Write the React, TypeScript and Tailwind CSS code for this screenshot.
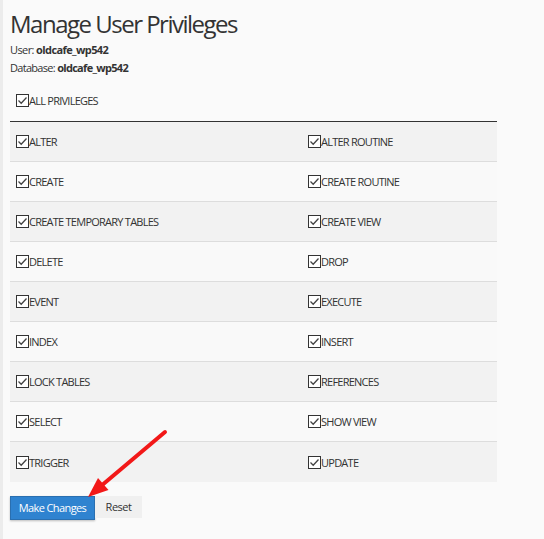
import React from 'react'

const rows: [string, string][] = [
    ['ALTER', 'ALTER ROUTINE'],
    ['CREATE', 'CREATE ROUTINE'],
    ['CREATE TEMPORARY TABLES', 'CREATE VIEW'],
    ['DELETE', 'DROP'],
    ['EVENT', 'EXECUTE'],
    ['INDEX', 'INSERT'],
    ['LOCK TABLES', 'REFERENCES'],
    ['SELECT', 'SHOW VIEW'],
    ['TRIGGER', 'UPDATE'],
]

function Check({ label }: { label: string }) {
    return (
        <label className="flex items-start">
            <span className="mt-[-1px] flex h-[13px] w-[13px] shrink-0 items-center justify-center border border-[#333] bg-white">
                <svg width="11" height="11" viewBox="0 0 11 11" fill="none">
                    <path d="M1.5 5.5 L4.2 8.2 L9.5 2.5" stroke="#444" strokeWidth="1.3" />
                </svg>
            </span>
            <span className="text-[11px] leading-[12px] tracking-[-0.75px] text-[#333]">{label}</span>
        </label>
    )
}

export default function App() {
    return (
        <div
            className="relative min-h-[539px] border-l-[3px] border-[#ececec] bg-[#fafafa] pl-[7px] pt-[10px] text-[#333]"
            style={{ fontFamily: '"Open Sans", sans-serif' }}
        >
            <h1 className="text-[24px] leading-[28px] tracking-[-1.5px] text-[#333]">Manage User Privileges</h1>
            <p className="mt-[4px] text-[11px] leading-[15px] tracking-[-0.6px]">
                User: <b>oldcafe_wp542</b>
            </p>
            <p className="mt-[3px] text-[11px] leading-[15px] tracking-[-0.7px]">
                Database: <b>oldcafe_wp542</b>
            </p>

            <div className="w-[487px]">
                <div className="border-b border-[#333] pb-[14px] pl-[6px] pt-[20px]">
                    <Check label="ALL PRIVILEGES" />
                </div>
                {rows.map(([a, b], i) => (
                    <div
                        key={a}
                        className={`grid h-[40px] grid-cols-[292px_1fr] items-center border-b border-[#dddddd] pt-[1px] ${
                            i % 2 === 0 ? 'bg-[#f2f2f2]' : 'bg-[#f9f9f9]'
                        } ${i === rows.length - 1 ? 'border-b-0' : ''}`}
                    >
                        <div className="pl-[6px]">
                            <Check label={a} />
                        </div>
                        <div className="pl-[6px]">
                            <Check label={b} />
                        </div>
                    </div>
                ))}
            </div>

            <div className="mt-[14px] flex items-start">
                <button className="h-[24px] w-[85px] border border-[#2a6fb0] bg-[#2f83d0] text-[11px] tracking-[-0.6px] text-white shadow-[0_1px_2px_rgba(0,0,0,0.25)]">
                    Make Changes
                </button>
                <button className="h-[22px] w-[47px] bg-[#f0f0f0] text-[11px] tracking-[-0.5px] text-[#333]">Reset</button>
            </div>

            <svg className="pointer-events-none absolute left-[-3px] top-0" width="544" height="539">
                <line x1="165" y1="432" x2="101" y2="486" stroke="#f21818" strokeWidth="4" strokeLinecap="round" />
                <polygon points="88,497 98,478 108.5,490" fill="#f21818" />
            </svg>
        </div>
    )
}
